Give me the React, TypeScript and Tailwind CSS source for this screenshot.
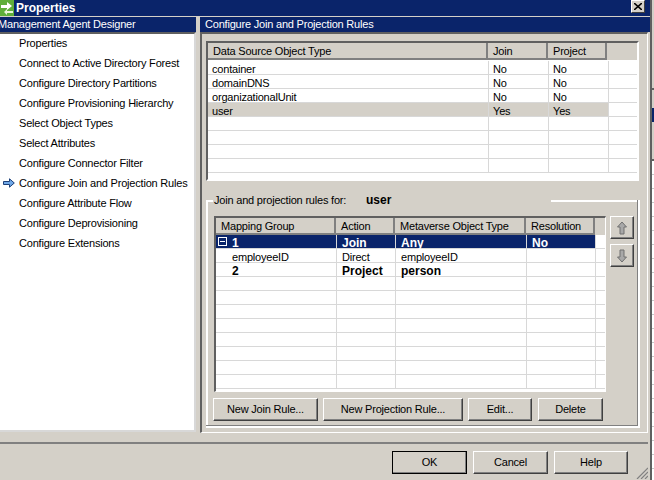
const sans = "font-['Liberation_Sans',Arial,sans-serif]";

const navItems = [
  "Properties",
  "Connect to Active Directory Forest",
  "Configure Directory Partitions",
  "Configure Provisioning Hierarchy",
  "Select Object Types",
  "Select Attributes",
  "Configure Connector Filter",
  "Configure Join and Projection Rules",
  "Configure Attribute Flow",
  "Configure Deprovisioning",
  "Configure Extensions",
];

const sourceRows = [
  ["container", "No", "No"],
  ["domainDNS", "No", "No"],
  ["organizationalUnit", "No", "No"],
  ["user", "Yes", "Yes"],
  ["", "", ""],
  ["", "", ""],
  ["", "", ""],
  ["", "", ""],
];

const ruleRows = [
  ["1", "Join", "Any", "No"],
  ["employeeID", "Direct", "employeeID", ""],
  ["2", "Project", "person", ""],
  ["", "", "", ""],
  ["", "", "", ""],
  ["", "", "", ""],
  ["", "", "", ""],
  ["", "", "", ""],
  ["", "", "", ""],
  ["", "", "", ""],
  ["", "", "", ""],
];

const stripTicks = Array.from({ length: 23 });

function HeaderCell({ label, className }: { label?: string; className: string }) {
  return (
    <div className={`flex h-[17px] shrink-0 items-center border-r-2 border-b-2 border-r-[#808080] border-b-[#808080] pt-[2px] pl-[5px] whitespace-nowrap ${className}`}>
      {label}
    </div>
  );
}

function Button({ label, className }: { label: string; className: string }) {
  return (
    <button className={`flex h-[23px] shrink-0 items-center justify-center border border-t-white border-l-white border-r-[#404040] border-b-[#404040] bg-[#d4d0c8] text-black shadow-[inset_-1px_-1px_0_#808080] ${className}`}>
      {label}
    </button>
  );
}

function ArrowButton({ up }: { up?: boolean }) {
  return (
    <button className="flex h-[23px] w-[24px] items-center justify-center border border-t-white border-l-white border-r-[#404040] border-b-[#404040] bg-[#d4d0c8] shadow-[inset_-1px_-1px_0_#808080]">
      <svg width="10" height="14" viewBox="0 0 10 14">
        <path
          d={up ? "M5 1 9.5 6H7v7H3V6H.5z" : "M5 13 9.5 8H7V1H3v7H.5z"}
          fill="#a8a8a8"
          stroke="#707070"
        />
      </svg>
    </button>
  );
}

export default function App() {
  return (
    <div className={`flex h-[480px] w-[654px] overflow-hidden bg-[#d4d0c8] text-[11px] leading-[13px] tracking-[-0.2px] text-black ${sans}`}>
      <div className="flex w-[650px] shrink-0 flex-col">
        {/* title bar */}
        <div className="flex h-[16px] shrink-0 items-center bg-[#0a246a]">
          <svg width="14" height="16" viewBox="0 0 14 16" className="shrink-0">
            <rect width="14" height="16" fill="#5fae3a" />
            <path d="M1 5h6V2l5 4-5 4V8H1z" fill="#fff" />
            <path d="M13 11H7V9l-3 3 3 3v-2h6z" fill="#e8f4d8" />
          </svg>
          <span className="ml-[2px] text-[12px] font-bold tracking-normal text-white">Properties</span>
          <button className="mr-[5px] mb-[3px] ml-auto flex h-[13px] w-[14px] items-center justify-center border border-t-white border-l-white border-r-[#404040] border-b-[#404040] bg-[#d4d0c8]">
            <svg width="8" height="7" viewBox="0 0 8 7">
              <path d="M0 0 8 7M8 0 0 7" stroke="#000" strokeWidth="1.6" />
            </svg>
          </button>
        </div>

        {/* main area */}
        <div className="mt-px flex h-[416px] shrink-0">
          {/* left nav */}
          <div className="flex w-[196px] shrink-0 flex-col">
            <div className="flex h-[15px] shrink-0 items-center overflow-hidden whitespace-nowrap bg-[#0a246a] text-white">
              <span className="-ml-[2px]">Management Agent Designer</span>
            </div>
            <div className="h-[400px] border-t-2 border-r-2 border-b-2 border-t-[#606060] border-r-[#d8d8d8] border-b-[#d8d8d8] bg-white">
              {navItems.map((item) => (
                <div key={item} className="relative flex h-[20px] items-center pb-[2px] pl-[19px] whitespace-nowrap">
                  {item === "Configure Join and Projection Rules" && (
                    <svg width="12" height="10" viewBox="0 0 12 10" className="absolute top-[4px] left-[3px]">
                      <path d="M.5 3.5h6V.8L11.3 5 6.5 9.2V6.5h-6z" fill="#6fa8e8" stroke="#1c3f78" />
                    </svg>
                  )}
                  {item}
                </div>
              ))}
            </div>
          </div>

          {/* right panel */}
          <div className="ml-[4px] flex min-w-0 flex-1 flex-col">
            <div className="flex h-[15px] shrink-0 items-center bg-[#0a246a] pl-[5px] text-white">
              Configure Join and Projection Rules
            </div>
            <div className="mr-[2px] flex h-[401px] flex-col border-t-2 border-r border-b border-l-2 border-t-[#606060] border-r-white border-b-white border-l-[#606060] pt-[7px] pl-[4px]">
              {/* source table */}
              <div className="flex h-[140px] w-[433px] shrink-0 flex-col overflow-hidden border-t-2 border-r-2 border-b-2 border-l-2 border-t-[#606060] border-r-white border-b-white border-l-[#606060] bg-white">
                <div className="flex bg-[#d4d0c8]">
                  <HeaderCell label="Data Source Object Type" className="w-[280px]" />
                  <HeaderCell label="Join" className="w-[60px]" />
                  <HeaderCell label="Project" className="w-[59px]" />
                  <div className="h-[17px] flex-1" />
                </div>
                <div className="h-px shrink-0" />
                {sourceRows.map((row, i) => (
                  <div key={i} className="flex h-[14px] shrink-0 border-b border-b-[#d8d8d8]">
                    <div className={`flex w-[400px] ${row[0] === "user" ? "bg-[#d4d0c8]" : ""}`}>
                      <div className="w-[280px] pt-[2px] pl-[4px]">{row[0]}</div>
                      <div className="w-[60px] border-l border-l-[#d8d8d8] pt-[2px] pl-[4px]">{row[1]}</div>
                      <div className="w-[60px] border-l border-l-[#d8d8d8] pt-[2px] pl-[4px]">{row[2]}</div>
                    </div>
                    <div className="border-l border-l-[#d8d8d8]" />
                  </div>
                ))}
              </div>

              {/* group box */}
              <div className="mt-[19px] flex h-[228px] w-[434px] shrink-0 flex-col border-r-2 border-b-2 border-r-white border-b-white">
                <div className="relative h-full border-r border-b border-r-[#808080] border-b-[#808080]">
                  <div className="flex h-[16px] -translate-y-[8px] items-center pl-[8px]">
                    <span className="w-[152px] whitespace-nowrap">Join and projection rules for:</span>
                    <span className="text-[12px] font-bold tracking-normal">user</span>
                    <div className="mt-px ml-auto h-[2px] w-[86px] bg-white" />
                  </div>
                  <div className="absolute top-0 bottom-0 left-0 w-[2px] bg-white" />
                  <div className="absolute top-0 left-0 h-[2px] w-[7px] bg-white" />

                  <div className="ml-[8px] flex gap-[4px]">
                    {/* rules table */}
                    <div className="flex h-[176px] w-[392px] shrink-0 flex-col overflow-hidden border-t-2 border-r border-b border-l-2 border-t-[#606060] border-r-white border-b-white border-l-[#606060] bg-white">
                      <div className="flex bg-[#d4d0c8]">
                        <HeaderCell label="Mapping Group" className="w-[120px]" />
                        <HeaderCell label="Action" className="w-[59px]" />
                        <HeaderCell label="Metaverse Object Type" className="w-[131px]" />
                        <HeaderCell label="Resolution" className="w-[69px]" />
                        <div className="h-[17px] flex-1" />
                      </div>
                      {ruleRows.map((row, i) => (
                        <div key={i} className="flex h-[14px] shrink-0">
                          <div
                            className={`flex w-[379px] border-b border-b-[#d8d8d8] ${i === 0 ? "bg-[#0a246a] text-[12px] font-bold tracking-normal text-white" : ""} ${i === 2 ? "text-[12px] font-bold tracking-normal" : ""}`}
                          >
                            <div className="relative w-[120px] pt-[2px] pl-[16px]">
                              {i === 0 && (
                                <span className="absolute top-[2px] left-[2px] flex h-[9px] w-[9px] items-center justify-center border border-white">
                                  <span className="h-px w-[5px] bg-white" />
                                </span>
                              )}
                              {row[0]}
                            </div>
                            <div className="w-[59px] border-l border-l-[#d8d8d8] pt-[2px] pl-[5px]">{row[1]}</div>
                            <div className="w-[131px] border-l border-l-[#d8d8d8] pt-[2px] pl-[5px]">{row[2]}</div>
                            <div className="w-[69px] border-l border-l-[#d8d8d8] pt-[2px] pl-[5px]">{row[3]}</div>
                          </div>
                          <div className="flex-1 border-b border-l border-b-[#d8d8d8] border-l-[#d8d8d8]" />
                        </div>
                      ))}
                    </div>
                    <div className="flex flex-col gap-[5px]">
                      <ArrowButton up />
                      <ArrowButton />
                    </div>
                  </div>

                  <div className="mt-[6px] ml-[7px] flex">
                    <Button label="New Join Rule..." className="w-[105px]" />
                    <Button label="New Projection Rule..." className="ml-[5px] w-[140px]" />
                    <Button label="Edit..." className="ml-[5px] w-[64px]" />
                    <Button label="Delete" className="ml-[6px] w-[65px]" />
                  </div>
                </div>
              </div>
            </div>
          </div>
        </div>

        {/* footer */}
        <div className="relative mt-[9px] mr-[2px] flex flex-1 justify-end gap-[6px] border-t-2 border-t-[#808080] pt-[7px] pr-[20px]">
          <Button label="OK" className="w-[75px] outline-1 -outline-offset-1 outline-black" />
          <Button label="Cancel" className="w-[75px]" />
          <Button label="Help" className="w-[74px]" />
          <svg width="12" height="12" viewBox="0 0 12 12" className="absolute right-0 bottom-px">
            <path d="M12 1 1 12M12 5 5 12M12 9 9 12" stroke="#808080" strokeWidth="1.2" />
          </svg>
        </div>
      </div>

      {/* edge of the window behind */}
      <div className="w-[2px] shrink-0 bg-[#606060]" />
      <div className="flex w-[2px] shrink-0 flex-col">
        <div className="h-[88px] shrink-0 bg-[#d4d0c8]" />
        <div className="h-[2px] shrink-0 bg-[#606060]" />
        <div className="h-[18px] shrink-0 bg-[#d4d0c8]" />
        <div className="h-[14px] shrink-0 bg-[#0a246a]" />
        <div className="h-[37px] shrink-0 bg-[#d4d0c8]" />
        <div className="h-[2px] shrink-0 bg-[#606060]" />
        {stripTicks.map((_, i) => (
          <div key={i} className="h-[14px] shrink-0 border-b border-b-[#c8c8c8] bg-white" />
        ))}
      </div>
    </div>
  );
}
